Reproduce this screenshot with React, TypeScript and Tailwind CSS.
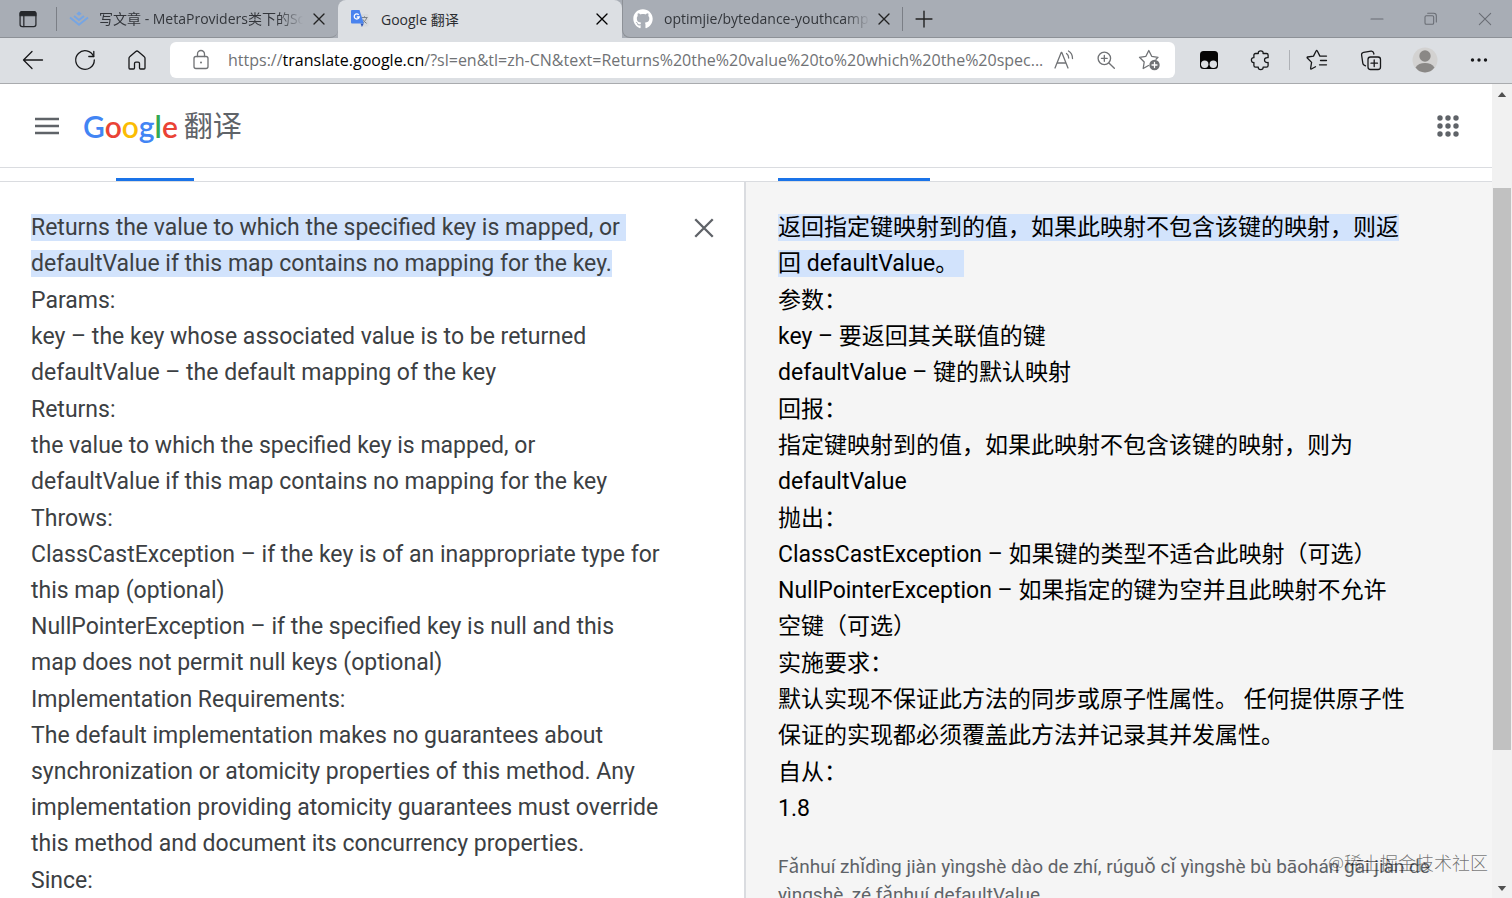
import type { ReactNode } from "react";
import { FaGithub } from "react-icons/fa";

const sourceSections = [
  ["Params:", "key – the key whose associated value is to be returned", "defaultValue – the default mapping of the key"],
  ["Returns:", "the value to which the specified key is mapped, or", "defaultValue if this map contains no mapping for the key"],
  [
    "Throws:",
    "ClassCastException – if the key is of an inappropriate type for",
    "this map (optional)",
    "NullPointerException – if the specified key is null and this",
    "map does not permit null keys (optional)",
  ],
  [
    "Implementation Requirements:",
    "The default implementation makes no guarantees about",
    "synchronization or atomicity properties of this method. Any",
    "implementation providing atomicity guarantees must override",
    "this method and document its concurrency properties.",
  ],
  ["Since:"],
];

const resultSections = [
  ["参数：", "key – 要返回其关联值的键", "defaultValue – 键的默认映射"],
  ["回报：", "指定键映射到的值，如果此映射不包含该键的映射，则为", "defaultValue"],
  ["抛出：", "ClassCastException – 如果键的类型不适合此映射（可选）", "NullPointerException – 如果指定的键为空并且此映射不允许", "空键（可选）"],
  ["实施要求：", "默认实现不保证此方法的同步或原子性属性。 任何提供原子性", "保证的实现都必须覆盖此方法并记录其并发属性。"],
  ["自从：", "1.8"],
];

type IconProps = { children: ReactNode; size?: string };

function Icon({ children, size = "size-6" }: IconProps) {
  return (
    <svg
      viewBox="0 0 24 24"
      fill="none"
      stroke="currentColor"
      strokeWidth="1.3"
      strokeLinecap="round"
      strokeLinejoin="round"
      className={`${size} shrink-0`}
      aria-hidden="true"
    >
      {children}
    </svg>
  );
}

function CloseIcon() {
  return (
    <Icon size="size-4">
      <path d="M4.5 4.5l15 15M19.5 4.5l-15 15" strokeWidth="2" />
    </Icon>
  );
}

function ToolButton({ label, className = "w-13", children }: { label: string; className?: string; children: ReactNode }) {
  return (
    <button aria-label={label} className={`flex h-9 shrink-0 items-center justify-center ${className}`}>
      {children}
    </button>
  );
}

function TabBar() {
  return (
    <div className="flex h-[38px] shrink-0 bg-[#a8adb5] text-[14px] text-[#33363b]">
      <div className="flex w-[338px] shrink-0 items-center rounded-br-lg border-b border-[#8d9197]">
        <button aria-label="Tab actions" className="flex w-14 items-center justify-center text-[#26282c]">
          <Icon size="size-5">
            <rect x="2.5" y="3" width="19" height="18" rx="2.5" strokeWidth="1.5" />
            <path d="M2.5 5.5a2.5 2.5 0 0 1 2.5-2.5h14a2.5 2.5 0 0 1 2.5 2.5V8h-19z" fill="currentColor" />
            <path d="M7 8v13" strokeWidth="1.5" />
          </Icon>
        </button>
        <span className="h-6 w-px bg-[#7b7f86]" />
        <svg viewBox="0 0 20 16" className="ml-3 h-4 w-5 shrink-0" fill="none" stroke="#76a5e3" strokeWidth="1.9">
          <path d="M1 6.5l9 7.2 9-7.2M5 5l5 4 5-4" />
          <path d="M10 .6l2.700 2.100L10 4.800 7.300 2.700z" fill="#76a5e3" stroke="none" />
        </svg>
        <span className="ml-[10px] min-w-0 flex-1 overflow-hidden whitespace-nowrap [mask-image:linear-gradient(to_right,black_88%,transparent)]">
          写文章 - MetaProviders类下的Scri
        </span>
        <button aria-label="Close tab" className="mr-[11px] ml-2 text-[#222]">
          <CloseIcon />
        </button>
      </div>
      <div className="flex w-[284px] shrink-0 items-center rounded-t-lg bg-[#dcdfe3] text-[#2b2d31]">
        <svg viewBox="0 0 20 20" className="ml-3 size-5 shrink-0">
          <path d="M8 5h9.500a1 1 0 0 1 1 1v10.500a1 1 0 0 1-1 1H12z" fill="#d5d8dc" />
          <path d="M11.500 8.500h6M14.500 7.300v1.200M16.800 8.500c-.6 2.200-2.200 4.200-4 5.300M13 10.500c.8 1.600 2 2.900 3.600 3.900" stroke="#7b8188" strokeWidth="1" fill="none" />
          <path d="M10.500 14.500h3.300L11.900 18z" fill="#2f55b5" />
          <path d="M2 1h7.500l4.300 13.500H2a1 1 0 0 1-1-1V2a1 1 0 0 1 1-1z" fill="#4a83ee" />
          <path d="M8.700 5.900A2.500 2.500 0 1 0 9.200 8H6.800" fill="none" stroke="#fff" strokeWidth="1.300" />
        </svg>
        <span className="ml-[11px] flex-1">Google 翻译</span>
        <button aria-label="Close tab" className="mr-3 text-black">
          <CloseIcon />
        </button>
      </div>
      <div className="flex min-w-0 flex-1 items-center rounded-bl-lg border-b border-l border-[#8d9197]">
        <FaGithub className="ml-[10px] size-5 shrink-0 text-white" />
        <span className="ml-[11px] w-[206px] overflow-hidden whitespace-nowrap [mask-image:linear-gradient(to_right,black_88%,transparent)]">
          optimjie/bytedance-youthcamp-j
        </span>
        <button aria-label="Close tab" className="ml-[6px] text-[#222]">
          <CloseIcon />
        </button>
        <span className="ml-[10px] h-6 w-px bg-[#7b7f86]" />
        <button aria-label="New tab" className="ml-[11px] text-[#222]">
          <Icon size="size-5">
            <path d="M12 2.500v19M2.500 12h19" strokeWidth="1.700" />
          </Icon>
        </button>
        <div className="ml-auto flex text-[#696d74]">
          <ToolButton label="Minimize" className="w-[54px]">
            <Icon size="size-4"><path d="M3 12h18" strokeWidth="1.600" /></Icon>
          </ToolButton>
          <ToolButton label="Restore" className="w-[54px]">
            <Icon size="size-4">
              <rect x="3" y="7" width="13" height="13" rx="2" strokeWidth="1.600" />
              <path d="M7 3.500h9a4 4 0 0 1 4 4v9" strokeWidth="1.600" />
            </Icon>
          </ToolButton>
          <ToolButton label="Close" className="w-[54px]">
            <Icon size="size-4"><path d="M3.500 3.500l17 17M20.500 3.500l-17 17" strokeWidth="1.600" /></Icon>
          </ToolButton>
        </div>
      </div>
    </div>
  );
}

function AddressBar() {
  return (
    <div className="flex h-[46px] shrink-0 items-center border-b border-[#a9abae] bg-[#dcdfe3] pr-[6px] pb-px pl-[7px] text-[#17181a]">
      <ToolButton label="Back">
        <Icon><path d="M21.500 12h-19M11 3.500L2.500 12l8.500 8.500" /></Icon>
      </ToolButton>
      <ToolButton label="Refresh">
        <Icon>
          <path d="M20.600 8.500A9.300 9.300 0 1 0 21.300 12" />
          <path d="M20.800 3.500v5h-5" />
        </Icon>
      </ToolButton>
      <ToolButton label="Home">
        <Icon>
          <path d="M4 10.300c0-.6.200-1.100.7-1.500l6.100-5.300c.7-.6 1.700-.6 2.400 0l6.100 5.300c.5.400.7.900.7 1.500V20c0 .6-.4 1-1 1h-3.500c-.6 0-1-.4-1-1v-4.500c0-.8-.6-1.400-1.400-1.400h-2.200c-.8 0-1.400.6-1.400 1.400V20c0 .6-.4 1-1 1H5c-.6 0-1-.4-1-1z" />
        </Icon>
      </ToolButton>
      <div className="ml-[7px] flex h-9 min-w-0 flex-1 items-center rounded-md bg-white pl-[19px] text-[#707275]">
        <Icon>
          <rect x="5" y="8.500" width="14" height="12" rx="2" />
          <path d="M8.500 8.500V6a3.500 3.500 0 0 1 7 0v2.500" />
          <circle cx="12" cy="14.500" r="1" fill="currentColor" stroke="none" />
        </Icon>
        <div role="textbox" aria-label="Address" className="ml-[15px] min-w-0 flex-1 overflow-hidden text-[16px] whitespace-nowrap">
          https://<span className="text-black">translate.google.cn</span>
          /?sl=en&amp;tl=zh-CN&amp;text=Returns%20the%20value%20to%20which%20the%20spec...
        </div>
        <ToolButton label="Read aloud" className="w-[42px]">
          <Icon>
            <path d="M3 20L9.200 4.500h.600L16 20M5 15h9" />
            <path d="M14.500 5.500c1.500 1 2.200 2.500 2.200 4.500M16.500 3c2.600 1.600 4 4 4 7.500" />
          </Icon>
        </ToolButton>
        <ToolButton label="Zoom" className="w-[42px]">
          <Icon size="size-5">
            <circle cx="10" cy="10" r="7.500" strokeWidth="1.600" />
            <path d="M15.500 15.500L22 22M10 6.500v7M6.500 10h7" strokeWidth="1.600" />
          </Icon>
        </ToolButton>
        <ToolButton label="Add to favorites" className="mr-1 w-11">
          <Icon>
            <path d="M11.500 17.500L6.200 20.500l1-6.500L2.500 9.300l6.400-1L11.800 2.500l2.900 5.800 6.300 1-2 2" />
            <circle cx="17.500" cy="17" r="5.200" fill="currentColor" stroke="none" />
            <path d="M17.500 14.500v5M15 17h5" stroke="#fff" />
          </Icon>
        </ToolButton>
      </div>
      <ToolButton label="Tampermonkey" className="ml-2 w-13">
        <svg viewBox="0 0 20 20" className="size-5">
          <rect x="1" y="1" width="18" height="18" rx="3.500" fill="#050505" />
          <circle cx="5.700" cy="14.300" r="3.700" fill="#dcdfe3" />
          <circle cx="14.300" cy="14.300" r="3.700" fill="#dcdfe3" />
        </svg>
      </ToolButton>
      <ToolButton label="Extensions">
        <Icon>
          <path d="M6.500 5.500h2.800c-.2-1.700.8-2.700 2.400-2.700s2.600 1 2.400 2.700h3.400c1 0 1.600.6 1.600 1.600v2.600c-2.400-.3-3.600.7-3.600 2.400s1.200 2.700 3.600 2.400v3c0 1-.6 1.600-1.600 1.600h-3.400c.2 1.700-.8 2.500-2.400 2.500s-2.600-.8-2.400-2.500H6.500c-1 0-1.600-.6-1.600-1.600v-3c-1.600.2-2.500-.8-2.500-2.400s.9-2.600 2.500-2.400V7.100c0-1 .6-1.600 1.600-1.600z" />
        </Icon>
      </ToolButton>
      <span className="ml-[2px] h-5 w-px bg-[#aeb1b6]" />
      <ToolButton label="Favorites" className="w-[54px]">
        <Icon>
          <path d="M10.500 18.800l-4.100 2.200c-.5.200-.9-.1-.8-.6l1-6L2.300 10c-.4-.4-.2-.9.300-1l5.900-.9 2.700-5.400c.2-.5.800-.5 1 0l2.700 5.400h6.600M15.500 12.500h6M14.500 16.800h7" />
        </Icon>
      </ToolButton>
      <ToolButton label="Collections" className="w-[54px]">
        <Icon>
          <rect x="9" y="9" width="12.500" height="12.500" rx="2.500" />
          <path d="M15.200 12v6.500M12 15.200h6.500M6.500 17.800l-1.300-.6c-.8-.5-1.300-1.200-1.400-2.100L2.600 7c-.2-1.300.7-2.500 2-2.700L12 3.100c1.300-.2 2.400.6 2.700 2l.2.900" />
        </Icon>
      </ToolButton>
      <ToolButton label="Profile" className="w-[54px]">
        <svg viewBox="0 0 26 26" className="size-[26px]">
          <circle cx="13" cy="13" r="12.500" fill="#d3d2d1" />
          <circle cx="13" cy="9" r="5.700" fill="#8a8886" />
          <path d="M3.500 20.500c2-3.200 5.200-4.500 9.500-4.500s7.500 1.300 9.500 4.500A12.500 12.500 0 0 1 13 25.500a12.500 12.500 0 0 1-9.500-5z" fill="#8a8886" />
        </svg>
      </ToolButton>
      <ToolButton label="Settings and more" className="w-[54px]">
        <Icon>
          <g fill="currentColor" stroke="none">
            <circle cx="5.500" cy="12" r="1.700" />
            <circle cx="12" cy="12" r="1.700" />
            <circle cx="18.500" cy="12" r="1.700" />
          </g>
        </Icon>
      </ToolButton>
    </div>
  );
}

function GoogleHeader() {
  return (
    <header className="flex h-[84px] shrink-0 items-center border-b border-[#dadce0] pr-8 pl-[35px] text-[#5f6368]">
      <button aria-label="Main menu">
        <svg viewBox="0 0 24 18" className="h-[18px] w-6" stroke="currentColor" strokeWidth="2.400">
          <path d="M0 2h24M0 9h24M0 16h24" />
        </svg>
      </button>
      <a href="#" className="ml-6 flex items-center">
        <span className="font-[Lato] text-[30px] leading-9 font-semibold">
          <span className="text-[#4285f4]">G</span>
          <span className="text-[#ea4335]">o</span>
          <span className="text-[#fbbc04]">o</span>
          <span className="text-[#4285f4]">g</span>
          <span className="text-[#34a853]">l</span>
          <span className="text-[#ea4335]">e</span>
        </span>
        <span className="ml-[6px] text-[29px] leading-9">翻译</span>
      </a>
      <button aria-label="Google apps" className="ml-auto">
        <svg viewBox="0 0 24 24" className="size-6" fill="currentColor">
          {[4, 12, 20].map((y) => [4, 12, 20].map((x) => <circle key={`${x}-${y}`} cx={x} cy={y} r="2.700" />))}
        </svg>
      </button>
    </header>
  );
}

function Sections({ sections }: { sections: string[][] }) {
  return (
    <>
      {sections.map((lines) => (
        <p key={lines[0]}>{lines.join("\n")}</p>
      ))}
    </>
  );
}

function ScrollBar() {
  return (
    <div className="flex w-5 shrink-0 flex-col items-stretch bg-[#f1f1f1] text-[#505050]">
      <button aria-label="Scroll up" className="flex h-5 items-center justify-center">
        <svg viewBox="0 0 10 6" className="h-[5px] w-[10px]" fill="currentColor"><path d="M0 6L5 0l5 6z" /></svg>
      </button>
      <div className="flex-[84]" />
      <div className="mx-px flex-[562] bg-[#c1c1c1]" />
      <div className="flex-[128]" />
      <button aria-label="Scroll down" className="flex h-5 items-center justify-center">
        <svg viewBox="0 0 10 6" className="h-[5px] w-[10px]" fill="currentColor"><path d="M0 0l5 6 5-6z" /></svg>
      </button>
    </div>
  );
}

export default function App() {
  return (
    <div className="flex h-screen flex-col overflow-hidden bg-white font-['Open_Sans','Noto_Sans_CJK_SC',sans-serif]">
      <TabBar />
      <AddressBar />
      <div className="flex min-h-0 flex-1">
        <div className="relative flex min-w-0 flex-1 flex-col overflow-hidden">
          <GoogleHeader />
          {/* bottom edge of the language tabs, scrolled under the header */}
          <div className="grid h-[14px] shrink-0 grid-cols-2 items-end border-b border-[#dadce0]">
            <div className="pl-[116px]">
              <div className="h-[3px] w-[78px] bg-[#1a73e8]" />
            </div>
            <div className="pl-8">
              <div className="h-[3px] w-[152px] bg-[#1a73e8]" />
            </div>
          </div>
          <main className="grid min-h-0 flex-1 grid-cols-2 font-[Roboto,'Noto_Sans_CJK_SC',sans-serif] text-[23px] leading-9 whitespace-pre">
            <section className="flex items-start border-r-2 border-[#dadce0] pt-7 pr-[26px] pl-[31px]">
              <div role="textbox" aria-multiline="true" aria-label="Source text" className="flex min-w-0 flex-1 flex-col gap-px text-[#3c4043]">
                <p>
                  <span className="bg-[#d2e3fc]">{"Returns the value to which the specified key is mapped, or \ndefaultValue if this map contains no mapping for the key."}</span>
                </p>
                <Sections sections={sourceSections} />
              </div>
              <button aria-label="Clear source text" className="mt-1 text-[#5f6368]">
                <Icon size="size-7">
                  <path d="M4.500 4.500l15 15M19.500 4.500l-15 15" strokeWidth="2" strokeLinecap="butt" />
                </Icon>
              </button>
            </section>
            <section className="bg-[#f5f5f5] pt-7 pl-8">
              <div className="flex flex-col gap-px text-black">
                <p>
                  <span className="bg-[#d2e3fc]">{"返回指定键映射到的值，如果此映射不包含该键的映射，则返\n回 defaultValue。 "}</span>
                </p>
                <Sections sections={resultSections} />
              </div>
              <p className="mt-[26px] text-[19px] leading-7 text-[#5f6368]">
                {"Fǎnhuí zhǐdìng jiàn yìngshè dào de zhí, rúguǒ cǐ yìngshè bù bāohán gāi jiàn de\nyìngshè, zé fǎnhuí defaultValue."}
              </p>
            </section>
          </main>
          <span className="absolute right-1 bottom-[21px] text-[18px] leading-7 font-light text-black/55">@稀土掘金技术社区</span>
        </div>
        <ScrollBar />
      </div>
    </div>
  );
}
